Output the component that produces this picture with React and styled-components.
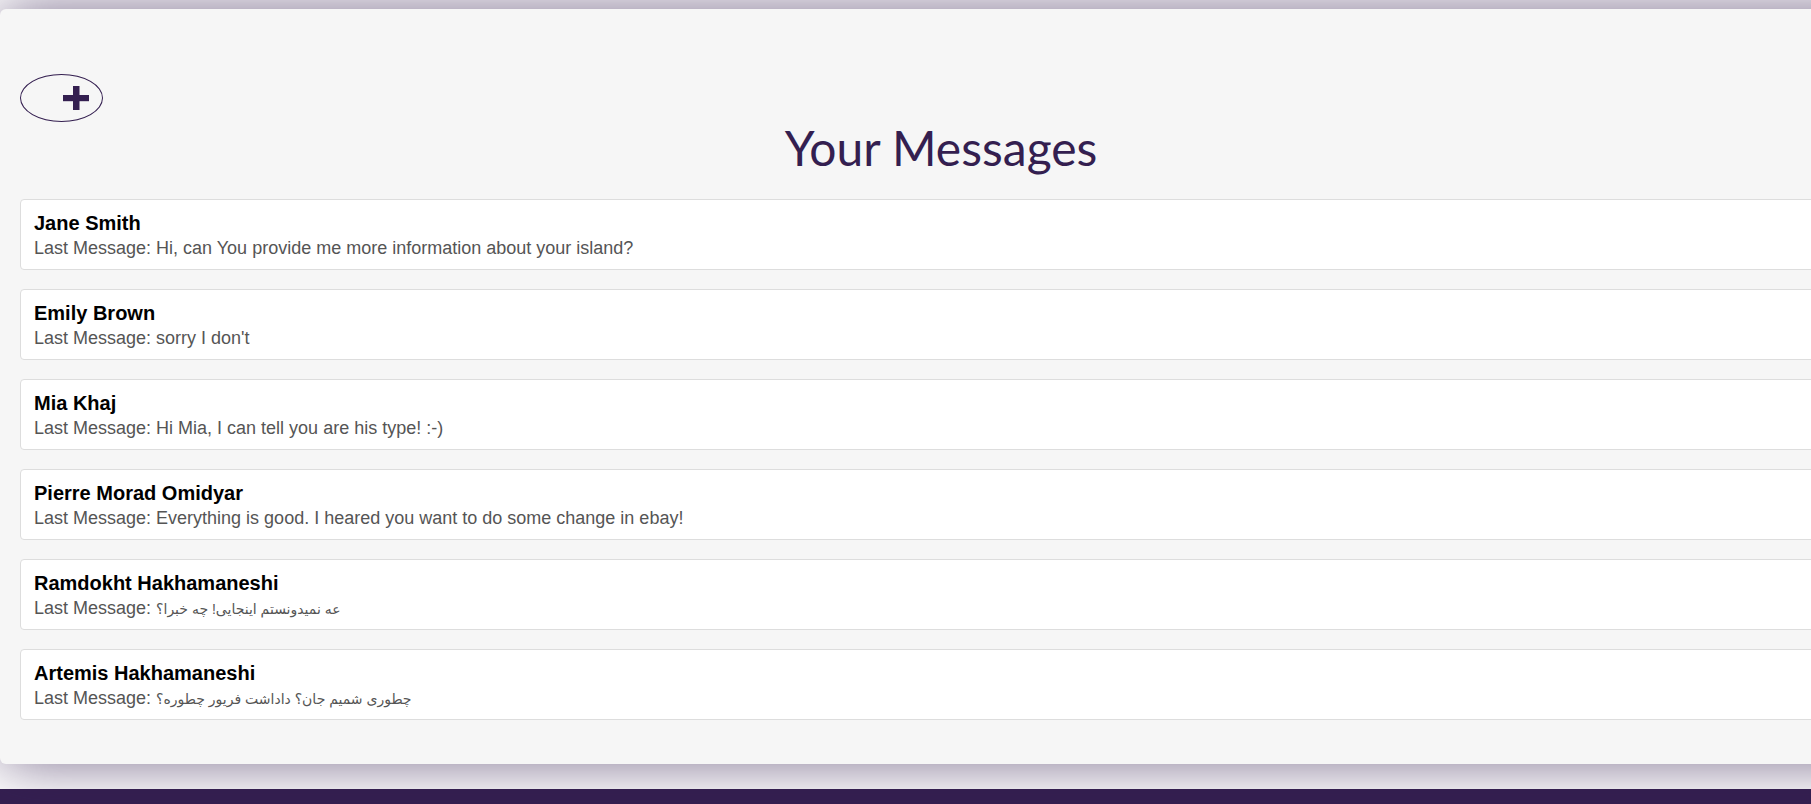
import React from "react";
import styled, { createGlobalStyle } from "styled-components";

const GlobalStyle = createGlobalStyle`
  html, body {
    margin: 0;
    padding: 0;
    overflow: hidden;
    background: #ffffff;
  }
`;

const Page = styled.div`
  padding-top: 9px;
`;

const Panel = styled.main`
  box-sizing: border-box;
  width: 1882px;
  padding: 65px 20px 44px;
  background: #f6f6f6;
  border-radius: 6px;
  box-shadow: 0 0 60px rgba(52, 31, 80, 0.65);
  position: relative;
  z-index: 1;
`;

const AddButton = styled.button`
  box-sizing: border-box;
  width: 83px;
  height: 48px;
  display: flex;
  align-items: center;
  justify-content: flex-end;
  padding: 0 13px 0 0;
  background: transparent;
  border: 1.6px solid #341f50;
  border-radius: 50%;
  color: #341f50;
  cursor: pointer;
`;

const Title = styled.h1`
  margin: 0 0 25px;
  text-align: center;
  font-family: Lato, "Open Sans", sans-serif;
  font-weight: 400;
  font-size: 48px;
  line-height: 52px;
  color: #341f50;
`;

const List = styled.ul`
  list-style: none;
  margin: 0;
  padding: 0;
  display: flex;
  flex-direction: column;
  gap: 19px;
`;

const Card = styled.li`
  box-sizing: border-box;
  height: 71px;
  background: #ffffff;
  border: 1px solid #dddddd;
  border-radius: 4px;
  padding: 12px 13px 10px;
  font-family: "Liberation Sans", Arial, "DejaVu Sans", sans-serif;
`;

const Name = styled.div`
  font-weight: 700;
  font-size: 20px;
  line-height: 23px;
  color: #000000;
`;

const LastMessage = styled.div`
  margin-top: 3px;
  height: 21px;
  font-size: 18px;
  line-height: 21px;
  color: #555555;
`;

const MessageText = styled.span`
  font-size: ${(p) => (p.$rtl ? "14px" : "inherit")};
  line-height: ${(p) => (p.$rtl ? "14px" : "inherit")};
`;

const Footer = styled.footer`
  margin-top: 25px;
  height: 80px;
  background: #341f50;
`;

const PlusIcon = () => (
  <svg width="26" height="24" viewBox="0 0 26 24" aria-hidden="true">
    <rect x="10" y="0" width="6.5" height="24" fill="currentColor" />
    <rect x="0" y="9" width="26" height="6.2" fill="currentColor" />
  </svg>
);

const messages = [
  { name: "Jane Smith", text: "Hi, can You provide me more information about your island?" },
  { name: "Emily Brown", text: "sorry I don't" },
  { name: "Mia Khaj", text: "Hi Mia, I can tell you are his type! :-)" },
  { name: "Pierre Morad Omidyar", text: "Everything is good. I heared you want to do some change in ebay!" },
  { name: "Ramdokht Hakhamaneshi", text: "عه نمیدونستم اینجایی! چه خبرا؟", rtl: true },
  { name: "Artemis Hakhamaneshi", text: "چطوری شمیم جان؟ داداشت فریور چطوره؟", rtl: true },
];

export default function App() {
  return (
    <>
      <GlobalStyle />
      <Page>
        <Panel>
          <AddButton aria-label="New message">
            <PlusIcon />
          </AddButton>
          <Title>Your Messages</Title>
          <List>
            {messages.map((m) => (
              <Card key={m.name}>
                <Name>{m.name}</Name>
                <LastMessage>
                  Last Message: <MessageText $rtl={m.rtl}>{m.text}</MessageText>
                </LastMessage>
              </Card>
            ))}
          </List>
        </Panel>
        <Footer />
      </Page>
    </>
  );
}
